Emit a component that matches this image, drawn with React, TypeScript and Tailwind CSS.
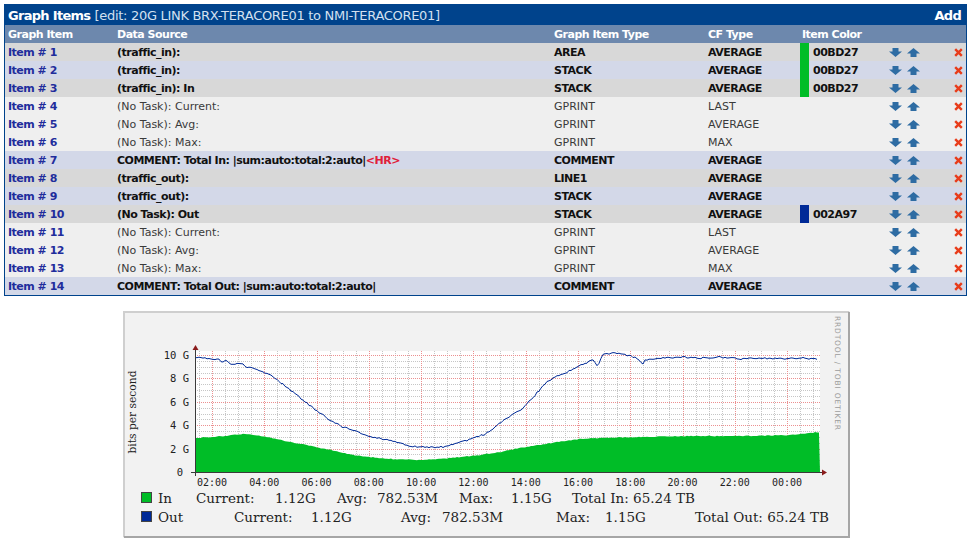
import React from "react";

type Row = {
  n: number;
  ds: string;
  t: string;
  cf: string;
  sw?: string;
  hex?: string;
  b: boolean;
  bg: string;
  hr?: boolean;
};

const G = "bg-[#d8d8d8]";
const L = "bg-[#d3d8e8]";
const W = "bg-[#efefef]";
const GREEN = "bg-[#00bd27]";
const BLUE = "bg-[#002a97]";

const rows: Row[] = [
  { n: 1, ds: "(traffic_in):", t: "AREA", cf: "AVERAGE", sw: GREEN, hex: "00BD27", b: true, bg: G },
  { n: 2, ds: "(traffic_in):", t: "STACK", cf: "AVERAGE", sw: GREEN, hex: "00BD27", b: true, bg: L },
  { n: 3, ds: "(traffic_in): In", t: "STACK", cf: "AVERAGE", sw: GREEN, hex: "00BD27", b: true, bg: G },
  { n: 4, ds: "(No Task): Current:", t: "GPRINT", cf: "LAST", b: false, bg: W },
  { n: 5, ds: "(No Task): Avg:", t: "GPRINT", cf: "AVERAGE", b: false, bg: W },
  { n: 6, ds: "(No Task): Max:", t: "GPRINT", cf: "MAX", b: false, bg: W },
  { n: 7, ds: "COMMENT: Total In: |sum:auto:total:2:auto|", t: "COMMENT", cf: "AVERAGE", b: true, bg: L, hr: true },
  { n: 8, ds: "(traffic_out):", t: "LINE1", cf: "AVERAGE", b: true, bg: G },
  { n: 9, ds: "(traffic_out):", t: "STACK", cf: "AVERAGE", b: true, bg: L },
  { n: 10, ds: "(No Task): Out", t: "STACK", cf: "AVERAGE", sw: BLUE, hex: "002A97", b: true, bg: G },
  { n: 11, ds: "(No Task): Current:", t: "GPRINT", cf: "LAST", b: false, bg: W },
  { n: 12, ds: "(No Task): Avg:", t: "GPRINT", cf: "AVERAGE", b: false, bg: W },
  { n: 13, ds: "(No Task): Max:", t: "GPRINT", cf: "MAX", b: false, bg: W },
  { n: 14, ds: "COMMENT: Total Out: |sum:auto:total:2:auto|", t: "COMMENT", cf: "AVERAGE", b: true, bg: L },
];

function DownArrow() {
  return (
    <svg width="13" height="9" viewBox="0 0 13 9">
      <path d="M3.5 0h6v3.5H13L6.5 9 0 3.5h3.5z" fill="#2e6ca3" />
    </svg>
  );
}
function UpArrow() {
  return (
    <svg width="13" height="9" viewBox="0 0 13 9">
      <path d="M6.5 0L13 5.5H9.5V9h-6V5.5H0z" fill="#2e6ca3" />
    </svg>
  );
}
function XIcon() {
  return (
    <svg width="9" height="9" viewBox="0 0 9 9">
      <path d="M1.2 1.2L7.8 7.8M7.8 1.2L1.2 7.8" stroke="#e83c1a" strokeWidth="2.4" />
    </svg>
  );
}

function interp(pts: [number, number][], x: number) {
  for (let i = 0; i < pts.length - 1; i++) {
    const [x0, y0] = pts[i];
    const [x1, y1] = pts[i + 1];
    if (x >= x0 && x <= x1) return y0 + ((y1 - y0) * (x - x0)) / (x1 - x0);
  }
  return pts[pts.length - 1][1];
}
function noise(i: number) {
  const s = Math.sin(i * 12.9898 + 78.233) * 43758.5453;
  return s - Math.floor(s) - 0.5;
}

const blueKeys: [number, number][] = [
  [195, 357], [205, 358], [212, 360], [218, 359], [222, 362], [226, 360], [232, 365], [236, 364],
  [241, 363], [246, 367], [255, 369], [263, 372], [270, 375], [280, 382], [293, 392], [303, 400],
  [313, 408], [323, 415], [333, 422], [343, 427], [353, 430], [365, 435], [377, 438], [387, 440],
  [400, 443], [410, 446], [420, 447], [433, 447], [443, 447], [455, 444], [465, 441], [473, 438],
  [485, 434], [490, 431], [500, 423], [510, 416], [523, 408], [535, 395], [547, 382], [557, 376],
  [567, 372], [575, 368], [580, 365], [588, 362], [593, 360], [597, 366], [600, 361], [602, 355],
  [608, 354], [613, 353], [620, 354], [630, 356], [637, 358], [640, 360], [642, 366], [645, 360],
  [660, 358], [680, 357], [700, 358], [720, 357], [740, 359], [760, 358], [780, 359], [800, 358],
  [818, 359],
];
const greenKeys: [number, number][] = [
  [195, 438], [210, 437], [225, 436], [243, 434], [255, 435], [267, 437], [280, 440], [295, 443],
  [307, 445], [320, 448], [335, 451], [353, 455], [370, 457], [390, 459], [420, 460], [440, 459],
  [460, 457], [480, 455], [500, 452], [520, 448], [540, 445], [557, 442], [580, 439], [600, 438],
  [640, 437], [690, 436], [750, 436], [790, 435], [819, 432],
];

const bluePts: string[] = [];
for (let x = 195; x <= 818; x += 2) {
  bluePts.push(`${x},${(interp(blueKeys, x) + noise(x) * 1.6).toFixed(1)}`);
}
const greenPts: string[] = [];
for (let x = 195; x <= 819; x += 2) {
  greenPts.push(`${x},${(interp(greenKeys, x) + noise(x + 500) * 0.8).toFixed(1)}`);
}
const greenPath = `M195,472 L${greenPts.join(" L")} L820,472 Z`;

const HOUR = 26.14;
const minorV: number[] = [];
for (let k = -1; k < 50; k++) {
  const x = 212 + k * (HOUR / 2);
  if (x > 196 && x < 820) minorV.push(Math.round(x) + 0.5);
}
const majorV: number[] = [];
const xLabels = ["02:00", "04:00", "06:00", "08:00", "10:00", "12:00", "14:00", "16:00", "18:00", "20:00", "22:00", "00:00"];
xLabels.forEach((_, i) => majorV.push(Math.round(212 + i * 2 * HOUR) + 0.5));
const GPX = 11.7;
const minorH: number[] = [];
for (let v = 0.5; v <= 10.01; v += 0.5) minorH.push(Math.round(472 - v * GPX) + 0.5);
const yLabels = ["0", "2 G", "4 G", "6 G", "8 G", "10 G"];
const majorH = yLabels.map((_, i) => Math.round(472 - i * 2 * GPX) + 0.5);

const serif = "'DejaVu Serif', serif";
const mono = "'DejaVu Sans Mono', monospace";

function Graph() {
  const legend1: [number, string][] = [
    [158, "In"], [196, "Current:"], [275, "1.12G"], [337, "Avg:"], [377, "782.53M"], [459, "Max:"], [511, "1.15G"],
  ];
  const legend2: [number, string][] = [
    [158, "Out"], [234, "Current:"], [311, "1.12G"], [401, "Avg:"], [442, "782.53M"], [556, "Max:"], [605, "1.15G"],
  ];
  return (
    <svg width="727" height="227" viewBox="123 311 727 227">
      <rect x="123" y="311" width="727" height="227" fill="#f2f2f2" />
      <path d="M124 537V312H849" fill="none" stroke="#cfcfcf" strokeWidth="2" />
      <path d="M124 537H849V312" fill="none" stroke="#a6a6a6" strokeWidth="2" />
      <rect x="195" y="351" width="625" height="121" fill="#ffffff" />
      {minorV.map((x) => (
        <line key={"mv" + x} x1={x} x2={x} y1={351} y2={472} stroke="#c6c6c6" strokeDasharray="1 1" />
      ))}
      {minorH.map((y) => (
        <line key={"mh" + y} x1={195} x2={820} y1={y} y2={y} stroke="#c6c6c6" strokeDasharray="1 1" />
      ))}
      {majorV.map((x) => (
        <line key={"Mv" + x} x1={x} x2={x} y1={351} y2={472} stroke="#ec9090" strokeDasharray="1 1" />
      ))}
      {majorH.map((y) => (
        <line key={"Mh" + y} x1={195} x2={820} y1={y} y2={y} stroke="#ec9090" strokeDasharray="1 1" />
      ))}
      <path d={greenPath} fill="#00bd27" />
      <polyline points={bluePts.join(" ")} fill="none" stroke="#002a97" strokeWidth="1" />
      <line x1="191" x2="822" y1="472.5" y2="472.5" stroke="#3a3a3a" />
      <line x1="195.5" x2="195.5" y1="476" y2="350" stroke="#3a3a3a" />
      <path d="M822 469.5L827 472.5L822 475.5z" fill="#8a1c1c" />
      <path d="M192.5 350L195.5 345L198.5 350z" fill="#8a1c1c" />
      {yLabels.map((l, i) => (
        <text key={l} x={i === 0 ? 183 : 189} y={472 - i * 2 * GPX + 4} textAnchor="end" fontFamily={mono} fontSize="10.5" fill="#222">
          {l}
        </text>
      ))}
      {xLabels.map((l, i) => (
        <text key={l + i} x={212 + i * 2 * HOUR} y={486} textAnchor="middle" fontFamily={mono} fontSize="10" fill="#222">
          {l}
        </text>
      ))}
      <text x="136" y="412" transform="rotate(-90 136 412)" textAnchor="middle" fontFamily={serif} fontSize="10.7" fill="#222">
        bits per second
      </text>
      <text x="835" y="316" transform="rotate(90 835 316)" fontFamily="'DejaVu Sans', sans-serif" fontSize="7.5" fill="#9c9c9c" textLength="114" lengthAdjust="spacing">
        RRDTOOL / TOBI OETIKER
      </text>
      <rect x="141.5" y="492.5" width="10" height="10" fill="#00bd27" stroke="#444" strokeWidth="1" />
      <rect x="141.5" y="511.5" width="10" height="10" fill="#002a97" stroke="#444" strokeWidth="1" />
      {legend1.map(([x, s]) => (
        <text key={"a" + x} x={x} y={503} fontFamily={serif} fontSize="13.5" fill="#222">
          {s}
        </text>
      ))}
      <text x={572} y={503} fontFamily={serif} fontSize="13.5" fill="#222" textLength="123" lengthAdjust="spacingAndGlyphs">
        Total In: 65.24 TB
      </text>
      {legend2.map(([x, s]) => (
        <text key={"b" + x} x={x} y={522} fontFamily={serif} fontSize="13.5" fill="#222">
          {s}
        </text>
      ))}
      <text x={695} y={522} fontFamily={serif} fontSize="13.5" fill="#222" textLength="134" lengthAdjust="spacingAndGlyphs">
        Total Out: 65.24 TB
      </text>
    </svg>
  );
}

export default function App() {
  return (
    <div className="min-h-[542px] w-[969px] bg-white pt-[4px] font-['DejaVu_Sans',Verdana,sans-serif]">
      <div className="ml-[4px] w-[963px] border border-[#00438c]">
        <div className="flex h-[20px] items-center justify-between bg-[#00438c] pl-[3px] pr-[5px] pt-[2px] text-[13px] text-white">
          <div className="whitespace-nowrap">
            <span className="font-bold tracking-[-0.7px]">Graph Items</span>{" "}
            <span className="tracking-[-0.3px] text-[#d3e0f0]">[edit: 20G LINK BRX-TERACORE01 to NMI-TERACORE01]</span>
          </div>
          <span className="font-bold tracking-[-0.7px]">Add</span>
        </div>
        <div className="flex h-[18px] items-center bg-[#6d88ad] pt-[2px] text-[11px] font-bold tracking-[-0.5px] text-white">
          <div className="w-[109px] shrink-0 pl-[3px]">Graph Item</div>
          <div className="w-[437px] shrink-0 pl-[3px]">Data Source</div>
          <div className="w-[154px] shrink-0 pl-[3px]">Graph Item Type</div>
          <div className="w-[94px] shrink-0 pl-[3px]">CF Type</div>
          <div className="w-[90px] shrink-0 pl-[3px]">Item Color</div>
        </div>
        {rows.map((r) => (
          <div key={r.n} className={`flex h-[18px] items-center whitespace-nowrap text-[11px] ${r.bg}`}>
            <div className="w-[109px] shrink-0 pl-[3px] pt-[2px] font-bold tracking-[-0.5px] text-[#1f2d9c]">Item # {r.n}</div>
            <div className={`w-[437px] shrink-0 pl-[3px] pt-[2px] ${r.b ? "font-bold tracking-[-0.5px] text-[#111]" : "text-[#3a3a3a]"}`}>
              {r.ds}
              {r.hr && <span className="text-[#e0203a]">{"<HR>"}</span>}
            </div>
            <div className={`w-[154px] shrink-0 pl-[3px] pt-[2px] ${r.b ? "font-bold tracking-[-0.5px] text-[#111]" : "text-[#3a3a3a]"}`}>{r.t}</div>
            <div className={`w-[94px] shrink-0 pl-[3px] pt-[2px] ${r.b ? "font-bold tracking-[-0.5px] text-[#111]" : "text-[#3a3a3a]"}`}>{r.cf}</div>
            <div className="flex h-full w-[90px] shrink-0 items-center">
              {r.sw && (
                <>
                  <div className={`ml-[1px] h-full w-[9px] ${r.sw}`} />
                  <span className="ml-[4px] pt-[2px] font-bold tracking-[-0.5px] text-[#111]">{r.hex}</span>
                </>
              )}
            </div>
            <div className="flex w-[40px] shrink-0 items-center gap-[5px]">
              <DownArrow />
              <UpArrow />
            </div>
            <div className="flex flex-1 items-center justify-end pr-[3px]">
              <XIcon />
            </div>
          </div>
        ))}
      </div>
      <div className="mt-[15px] flex justify-center pl-[4px]">
        <Graph />
      </div>
    </div>
  );
}
